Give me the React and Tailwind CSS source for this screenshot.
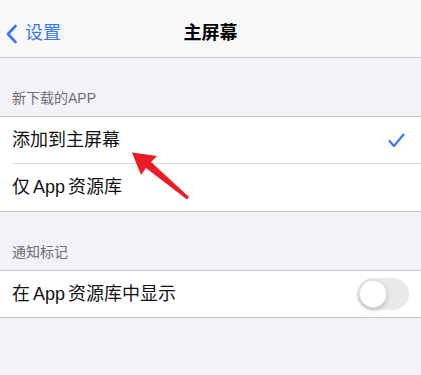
import React from 'react';

const font = { fontFamily: '"Liberation Sans", "Noto Sans CJK SC", sans-serif' };

function Row({ children, right, last, h = 'h-[47px]' }) {
  return (
    <div className={`flex ${h} items-center bg-white pl-3`}>
      <div className={`flex h-full flex-1 items-center pr-3 ${last ? '' : 'border-b border-[#dcdce0]'}`}>
        <span className="flex-1 text-[18px] text-[#111]">{children}</span>
        {right}
      </div>
    </div>
  );
}

const App_ = () => <span className="mx-[3px]">App</span>;

export default function App() {
  return (
    <div className="relative h-[375px] w-[421px] overflow-hidden bg-[#f2f2f7]" style={font}>
      {/* NAV */}
      <div className="relative flex h-[58px] items-center border-b border-[#c8c8cc] bg-[#f8f8f8] pt-[10px]">
        <div className="flex items-center pl-[5px] text-[#3478f6]">
          <svg width="13" height="20" viewBox="0 0 13 20" fill="none">
            <path d="M10.5 2 L3 10 L10.5 18" stroke="#3478f6" strokeWidth="2.6" strokeLinecap="round" strokeLinejoin="round" />
          </svg>
          <span className="ml-[7px] text-[18px]">设置</span>
        </div>
        <div className="absolute inset-x-0 text-center text-[18px] font-semibold text-black pointer-events-none">主屏幕</div>
      </div>

      {/* SECTION 1 */}
      <div className="flex h-[58px] items-end px-3 pb-[7px] text-[14px] text-[#6d6d72]">新下载的APP</div>
      <div className="border-y border-[#c8c8cc]">
        <Row right={
          <svg width="17" height="15" viewBox="0 0 17 15" fill="none" className="mr-[4px]">
            <path d="M1.5 8 L6 13 L15.5 1.5" stroke="#3478f6" strokeWidth="2.2" strokeLinecap="round" strokeLinejoin="round" />
          </svg>
        }>添加到主屏幕</Row>
        <Row last>仅<App_ />资源库</Row>
      </div>

      {/* SECTION 2 */}
      <div className="flex h-[58px] items-end px-3 pb-[7px] text-[14px] text-[#6d6d72]">通知标记</div>
      <div className="border-y border-[#c8c8cc]">
        <Row last h="h-[46px]" right={
          <div className="relative h-[32px] w-[52px] rounded-full bg-[#e9e9eb]">
            <div className="absolute left-[2px] top-[2px] h-[28px] w-[28px] rounded-full bg-white shadow-[0_2px_4px_rgba(0,0,0,0.2)] border border-[#e4e4e4]" />
          </div>
        }>在<App_ />资源库中显示</Row>
      </div>

      {/* ARROW */}
      <svg className="absolute left-0 top-0 pointer-events-none" width="421" height="375">
        <polygon points="132,152.5 157,156 151,162 189,197 187,199.5 146,168 141,175" fill="#ec1c24" />
      </svg>
    </div>
  );
}
